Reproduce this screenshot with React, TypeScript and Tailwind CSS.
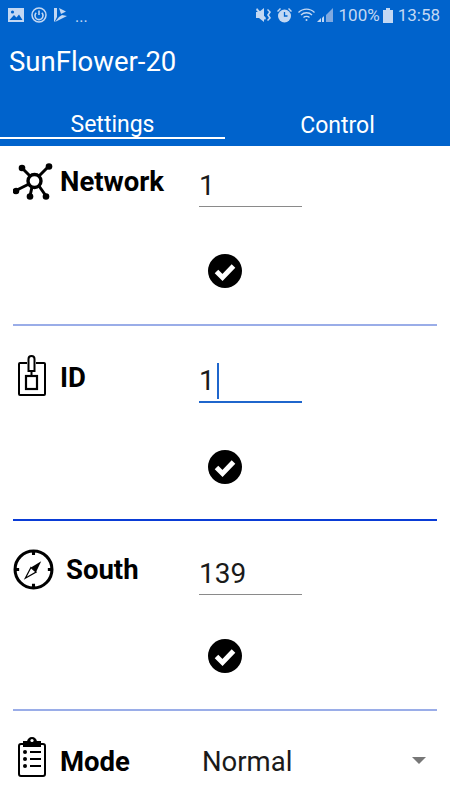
import React from "react";

const FONT = "font-['Roboto',sans-serif]";

const NetworkIcon = () => (
  <svg width="40" height="38" viewBox="0 0 40 38" fill="none" stroke="black" strokeWidth="3">
    <circle cx="21.5" cy="18" r="6.5" strokeWidth="3.4" />
    <path d="M9 5 L17 13 M36 3 L26 13 M2 28 L16 21 M17 33 L19 24 M33 33 L26 23" />
    <g fill="black" stroke="none">
      <circle cx="9" cy="5" r="3.3" />
      <circle cx="36" cy="3.5" r="3.3" />
      <circle cx="3" cy="28" r="3.3" />
      <circle cx="17" cy="33.5" r="3.3" />
      <circle cx="33" cy="33.5" r="3.3" />
    </g>
  </svg>
);

const BadgeIcon = () => (
  <svg className="overflow-visible" width="30" height="42" viewBox="2 2 30 42" fill="none" stroke="black" strokeWidth="2">
    <path d="M11 8 H4 a1 1 0 0 0 -1 1 V39 a1 1 0 0 0 1 1 H28 a1 1 0 0 0 1 -1 V9 a1 1 0 0 0 -1 -1 H20" />
    <path d="M12.5 16 V4 a3 3 0 0 1 6 0 V16 Z" />
    <rect x="10" y="21" width="11" height="13" strokeWidth="2.2" />
    <path d="M15.5 16 V21" />
  </svg>
);

const CompassIcon = () => (
  <svg className="overflow-visible" width="41" height="41" viewBox="0 1 40 40" fill="none">
    <circle cx="20" cy="20" r="18" stroke="black" strokeWidth="3" />
    <path d="M20 2 V6 M20 34 V38 M2 20 H6 M34 20 H38" stroke="black" strokeWidth="3" />
    <path d="M27.5 12 L22.5 22.5 L17.5 18 Z" fill="black" />
    <path d="M12 28.5 L17.5 18 L22.5 22.5 Z" stroke="black" strokeWidth="1.2" />
  </svg>
);

const ClipboardIcon = () => (
  <svg className="overflow-visible" width="30" height="42" viewBox="1 5 30 42" fill="none" stroke="black" strokeWidth="2">
    <rect x="2" y="8" width="26" height="32" rx="2" />
    <path d="M7 8 V6 H11 a4 4 0 0 1 8 0 H23 V10 H7 Z" fill="black" />
    <circle cx="15" cy="4.5" r="1.6" fill="white" stroke="none" />
    <g fill="black" stroke="none">
      <circle cx="8" cy="16" r="2" />
      <circle cx="8" cy="23" r="2" />
      <circle cx="8" cy="30" r="2" />
    </g>
    <path d="M13 16 H24 M13 23 H24 M13 30 H24" />
  </svg>
);

const CheckButton = () => (
  <svg width="34" height="34" viewBox="0 0 34 34">
    <circle cx="17" cy="17" r="17" fill="black" />
    <path d="M8.5 17.5 L14.5 23.5 L25.5 12" fill="none" stroke="white" strokeWidth="5" />
  </svg>
);

const StatusBar = () => (
  <div className="flex h-[30px] items-center justify-between pl-[8px] pr-[10px] text-[#c3d8f3]">
    <div className="flex items-center gap-[7px]">
      <svg width="16" height="14" viewBox="0 0 16 14">
        <path d="M0 0 H16 V14 H0 Z" fill="#c3d8f3" />
        <circle cx="4.5" cy="4" r="1.6" fill="#0063cc" />
        <path d="M1.5 12 L6 7 L8.5 9.5 L11 6.5 L14.5 12 Z" fill="#0063cc" />
      </svg>
      <svg width="16" height="16" viewBox="0 0 16 16" fill="none" stroke="#c3d8f3">
        <circle cx="8" cy="8" r="7" strokeWidth="1.5" />
        <path d="M5.2 5.8 a4 4 0 1 0 5.6 0 M8 3.5 V8" strokeWidth="1.6" />
      </svg>
      <svg width="13" height="14" viewBox="0 0 13 14" fill="#c3d8f3">
        <path d="M0 0 L3 0 L3 9 L1 13 L0 14 Z M5 0 L12 3.5 L7 6 Z M1 14 L13 8 L8 7 L5 9 Z" />
      </svg>
      <span className={`${FONT} ml-[1px] mt-[4px] text-[16px] leading-none`}>...</span>
    </div>
    <div className="flex items-center">
      <svg width="16" height="14" viewBox="0 0 16 14" fill="#c3d8f3">
        <path d="M0 4 H3 L8 0 V14 L3 10 H0 Z M1 0 L10 10 L9 12 L0 2 Z M12 1 L15 4 L13 7 L15 10 L12 13 L11 12 L13 10 L11 7 L13 4 L11 2 Z" />
      </svg>
      <svg className="ml-[5px]" width="15" height="15" viewBox="0 0 15 15">
        <circle cx="7.5" cy="8" r="6.5" fill="#c3d8f3" />
        <path d="M7.5 4 V8 H10.5" fill="none" stroke="#0063cc" strokeWidth="1.3" />
        <path d="M0 3 L3 0 L4 1 L1 4 Z M15 3 L12 0 L11 1 L14 4 Z" fill="#c3d8f3" />
      </svg>
      <svg className="ml-[6px]" width="17" height="14" viewBox="0 0 17 14" fill="none" stroke="#c3d8f3" strokeWidth="1.3">
        <path d="M0.5 4.5 C5 0 12 0 16.5 4.5 M3 7 C6 4 11 4 14 7 M5.5 9.5 C7 8 10 8 11.5 9.5" />
        <circle cx="8.5" cy="12" r="1" fill="#c3d8f3" stroke="none" />
      </svg>
      <svg className="ml-[2px]" width="17" height="14" viewBox="0 0 17 14">
        <path d="M0 14 H4 V10 Z" fill="#c3d8f3" />
        <path d="M5 14 H7 V8 L5 10 Z" fill="#c3d8f3" />
        <path d="M9 14 H16 V0 L9 7 Z" fill="#7fa9e0" />
      </svg>
      <span className={`${FONT} ml-[5px] text-[17px] leading-none`}>100%</span>
      <svg className="ml-[3px]" width="10" height="15" viewBox="0 0 10 15" fill="#c3d8f3">
        <path d="M3 0 H7 V2 H10 V15 H0 V2 H3 Z" />
      </svg>
      <span className={`${FONT} ml-[5px] text-[17px] leading-none`}>13:58</span>
    </div>
  </div>
);

const Field = ({
  icon,
  label,
  value,
  focused,
  lineColor,
  gap,
  rowH,
  checkGap,
}: {
  icon: React.ReactNode;
  label: string;
  value: string;
  focused?: boolean;
  lineColor: string;
  gap: string;
  rowH: string;
  checkGap: string;
}) => (
  <section className={`mx-[13px] flex flex-col border-b-2 ${lineColor} ${rowH}`}>
    <div className="flex items-start">
      <div className="flex h-[42px] w-[186px] items-center pb-[8px]">
        <div className="flex w-[40px] justify-center">{icon}</div>
        <span className={`${gap} text-[27.5px] font-bold leading-none text-black`}>{label}</span>
      </div>
      <div
        className={`flex h-[42px] w-[103px] items-center text-[28px] text-[#1a1a1a] ${
          focused ? "border-b-2 border-[#1f66cc]" : "border-b border-[#8a8a8a]"
        }`}
      >
        <span className="leading-none">{value}</span>
        {focused && <span className="ml-[2px] h-[36px] w-[2px] bg-[#1f66cc]" />}
      </div>
    </div>
    <div className={`${checkGap} flex pl-[195px]`}>
      <CheckButton />
    </div>
  </section>
);

export default function App() {
  return (
    <div className={`${FONT} h-[800px] w-[450px] overflow-hidden bg-white`}>
      <header className="bg-[#0063cc] text-white">
        <StatusBar />
        <div className="flex h-[64px] items-center pl-[9px] text-[27.5px] leading-none">SunFlower-20</div>
        <div className="flex h-[52px]">
          <div className="flex h-[45px] w-[225px] items-center justify-center border-b-2 border-white pt-[17px] text-[23px] leading-none">
            Settings
          </div>
          <div className="flex h-[45px] flex-1 items-center justify-center pt-[17px] text-[23px] leading-none">
            Control
          </div>
        </div>
      </header>
      <main>
        <Field
          icon={<NetworkIcon />}
          label="Network"
          value="1"
          lineColor="border-[#9aade8]"
          gap="ml-[7px]"
          rowH="h-[180px] pt-[19px]"
          checkGap="mt-[47px]"
        />
        <Field
          icon={<BadgeIcon />}
          label="ID"
          value="1"
          focused
          lineColor="border-[#0a3cd6]"
          gap="ml-[7px]"
          rowH="h-[195px] pt-[35px]"
          checkGap="mt-[47px]"
        />
        <Field
          icon={<CompassIcon />}
          label="South"
          value="139"
          lineColor="border-[#9aade8]"
          gap="ml-[13px]"
          rowH="h-[190px] pt-[32px]"
          checkGap="mt-[44px]"
        />
        <div className="mx-[13px] flex h-[90px] items-center pt-[12px]">
          <div className="flex w-[186px] items-center">
            <div className="flex w-[40px] justify-center">
              <ClipboardIcon />
            </div>
            <span className="ml-[7px] text-[27.5px] font-bold leading-none text-black">Mode</span>
          </div>
          <span className="ml-[3px] text-[27.5px] leading-none text-[#1a1a1a]">Normal</span>
          <div className="ml-auto mb-[4px] mr-[11px] h-0 w-0 border-x-[7px] border-t-[7px] border-x-transparent border-t-[#777777]" />
        </div>
      </main>
    </div>
  );
}
